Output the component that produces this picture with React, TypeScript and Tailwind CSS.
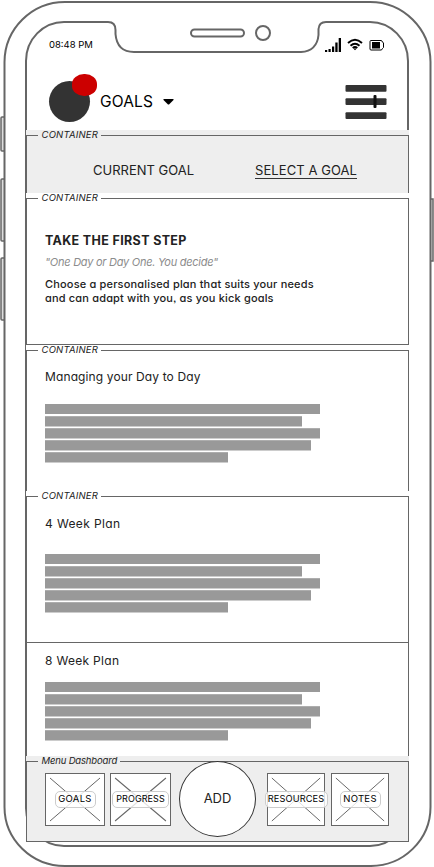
import type { ReactNode } from "react";

function PhoneFrame() {
  return (
    <svg className="absolute inset-0" width="434" height="867" viewBox="0 0 434 867" fill="none" stroke="#666" strokeWidth="2">
      <g strokeWidth="1.5">
        <path d="M4 117H2q-1 0-1 1v32q0 1 1 1h2M4 179H2q-1 0-1 1v60q0 1 1 1h2M4 258H2q-1 0-1 1v60q0 1 1 1h2" fill="#ddd" />
        <path d="M430 199h3v62h-3" fill="#ddd" />
      </g>
      <path d="M65 2H370A60.500 60.500 0 0 1 430.500 62V807A60 59 0 0 1 370 866H65A60.500 59 0 0 1 4.500 807V62A60.500 60.500 0 0 1 65 2Z" fill="white" />
      <path d="M64 22H108Q115.500 22 115.500 30V34Q117 52 134 52H301Q317 51 318.500 35V29Q319 22 326 22H370A38 39 0 0 1 408 61V808A38 38 0 0 1 370 846H64A38 38 0 0 1 26 808V61A38 39 0 0 1 64 22Z" />
      <rect x="191" y="29.500" width="53" height="7" rx="3.500" />
      <circle cx="263" cy="33" r="7" />
    </svg>
  );
}

function StatusIcons() {
  return (
    <svg width="63" height="16" viewBox="0 0 63 16" fill="black">
      <path d="M0 12h2.200v2H0zM3.500 11h2.200v3h-2.200zM7 8.500h2.200V14H7zM10.300 4.500h2.300v9.500h-2.300zM13.700 0h2.300v14h-2.300z" />
      <g fill="none" stroke="black" strokeWidth="1.900">
        <path d="M23 5Q30 -1.500 37 5" />
        <path d="M25.500 7.700Q30 3.700 34.500 7.700" />
        <path d="M27.700 10Q30 8 32.300 10" />
      </g>
      <path d="M28.500 10.800L30 12.300 31.500 10.800Q30 9.800 28.500 10.800Z" />
      <path d="M46 2.500H56q1 0 1.500 1.500l1 1v4.500l-1 1Q57 12 56 12H46q-1 0-1-1V3.500q0-1 1-1Z" fill="none" stroke="black" />
      <path d="M47 4h8v6.500h-8z" />
    </svg>
  );
}

type PanelProps = {
  label: string;
  className: string;
  labelClass?: string;
  children: ReactNode;
};

function Panel({ label, className, labelClass = "w-[63px] tracking-[0.2px]", children }: PanelProps) {
  return (
    <section className={`relative shrink-0 pt-[5px] ${className}`}>
      <span className={`absolute top-0 left-3 h-[10px] bg-inherit pl-[3.5px] text-[9.5px] leading-[10px] whitespace-nowrap text-[#222] italic ${labelClass}`}>
        {label}
      </span>
      {children}
    </section>
  );
}

function TextLines() {
  return (
    <div className="flex flex-col gap-px">
      <div className="mb-px h-[10px] w-[275px] bg-[#999]" />
      <div className="h-[11px] w-[257px] border-t border-b border-t-[#adadad] border-b-[#ccc] bg-[#999]" />
      <div className="h-[11px] w-[275px] border-t border-b border-t-[#adadad] border-b-[#ccc] bg-[#999]" />
      <div className="h-[11px] w-[266px] border-t border-b border-t-[#adadad] border-b-[#ccc] bg-[#999]" />
      <div className="h-[11px] w-[183px] border-t border-b border-t-[#adadad] border-b-[#ccc] bg-[#999]" />
    </div>
  );
}

type TileProps = { label: string; className: string; pillClass: string };

function Tile({ label, className, pillClass }: TileProps) {
  return (
    <div className={`relative mt-[11px] flex h-[53px] shrink-0 items-center justify-center border border-[#666] bg-white ${className}`}>
      <svg className="absolute inset-0 h-full w-full" viewBox="0 0 58 51" preserveAspectRatio="none" stroke="#666" strokeWidth="1">
        <path d="M4 4L54 47M54 4L4 47" />
      </svg>
      <span className={`relative flex h-[17px] shrink-0 items-center justify-center rounded-[5px] border border-[#ccc] bg-white/80 whitespace-nowrap text-black ${pillClass}`}>
        {label}
      </span>
    </div>
  );
}

export default function App() {
  return (
    <div className="relative h-[867px] w-[434px] overflow-hidden bg-white font-['Inter','Liberation_Sans',sans-serif] text-[#222] [font-feature-settings:'cv11','ss03']">
      <PhoneFrame />
      <main className="relative ml-[26px] flex w-[383px] flex-col pt-[38px]">
        <div className="flex h-4 items-start justify-between pr-[21px] pl-[23px] text-black">
          <span className="text-[9.5px] leading-[13px]">08:48 PM</span>
          <StatusIcons />
        </div>
        <header className="flex h-[76px] items-start pt-5 pr-[22px] pl-[22.5px]">
          <div className="relative mt-[7px] size-[41px] rounded-full bg-[#333]">
            <div className="absolute -top-[7px] left-[23.5px] h-[22px] w-[25px] rounded-[12px/10px] bg-[#c00]" />
          </div>
          <h1 className="mt-[17.5px] ml-[10.5px] w-[62px] text-[15.5px] leading-5 tracking-[0.15px] text-black">GOALS</h1>
          <svg className="mt-[25px] ml-px" width="11" height="7" viewBox="0 0 11 7">
            <path d="M1 0h9q1 0 .5 1L6.500 5q-1 1-2 0L.5 1Q0 0 1 0Z" />
          </svg>
          <svg className="mt-[11px] ml-auto" width="42" height="34" viewBox="0 0 42 34" fill="#333">
            <rect x="0.500" y="0" width="41" height="6.700" rx="1" />
            <rect x="0.500" y="13.300" width="41" height="6.700" rx="1" />
            <rect x="0.500" y="27.300" width="41" height="6.700" rx="1" />
            <rect x="28.500" y="10" width="3" height="13" rx="1" fill="#111" />
          </svg>
        </header>

        <Panel label="CONTAINER" className="h-[63px] bg-[#eee]">
          <nav className="flex h-[58px] border-t border-r border-l border-[#666] pt-[26px] text-[13px] leading-[17px]">
            <span className="ml-[66px] w-[162px]">CURRENT GOAL</span>
            <span className="h-[17px] border-b border-[#333] tracking-[0.08px]">SELECT A GOAL</span>
          </nav>
        </Panel>

        <Panel label="CONTAINER" className="h-[152px] bg-white">
          <div className="h-[147px] border border-[#666] pt-[34px] pl-[18px]">
            <h2 className="text-[12.5px] leading-4 font-bold tracking-[0.35px]">TAKE THE FIRST STEP</h2>
            <p className="mt-[6px] text-[11px] leading-[14px] tracking-[-0.26px] text-[#8c8c8c] italic">"One Day or Day One. You decide"</p>
            <p className="mt-2 text-[11px] leading-[14px] font-medium tracking-[0.17px] whitespace-nowrap">
              Choose a personalised plan that suits your needs
              <br />
              and can adapt with you, as you kick goals
            </p>
          </div>
        </Panel>

        <Panel label="CONTAINER" className="h-[146px] bg-white">
          <div className="h-[141px] border-t border-r border-l border-[#666] pt-[18px] pl-[18px]">
            <h2 className="mb-[19px] text-[12px] leading-4 tracking-[0.12px]">Managing your Day to Day</h2>
            <TextLines />
          </div>
        </Panel>

        <Panel label="CONTAINER" className="h-[265px] bg-white">
          <div className="h-[147px] border border-[#666] pt-[19px] pl-[18px]">
            <h2 className="mb-[22px] text-[12px] leading-4 tracking-[0.38px]">4 Week Plan</h2>
            <TextLines />
          </div>
          <div className="h-[113px] border-r border-l border-[#666] pt-[10px] pl-[18px]">
            <h2 className="mb-[13px] text-[12px] leading-4 tracking-[0.3px]">8 Week Plan</h2>
            <TextLines />
          </div>
        </Panel>

        <Panel label="Menu Dashboard" className="h-[86px] bg-[#eee]" labelClass="w-[82px] tracking-[-0.16px]">
          <div className="flex h-[81px] items-start border border-[#666] pl-[18px]">
            <Tile label="GOALS" className="w-[60px]" pillClass="w-[41px] text-[9.5px] tracking-[0.3px]" />
            <Tile label="PROGRESS" className="ml-[5px] w-[61px]" pillClass="w-[57px] pb-0.5 text-[9px] tracking-[0.1px]" />
            <button className="-mt-px ml-2 flex h-[76px] w-[77px] shrink-0 items-center justify-center rounded-[50%] border border-[#333] bg-white pb-px text-[13px]">ADD</button>
            <Tile label="RESOURCES" className="ml-[11px] w-[58px]" pillClass="w-[63px] pb-0.5 text-[9.25px] tracking-[0.12px]" />
            <Tile label="NOTES" className="ml-[6px] w-[58px]" pillClass="w-[41px] text-[9.5px] tracking-[0.3px]" />
          </div>
        </Panel>
      </main>
    </div>
  );
}
